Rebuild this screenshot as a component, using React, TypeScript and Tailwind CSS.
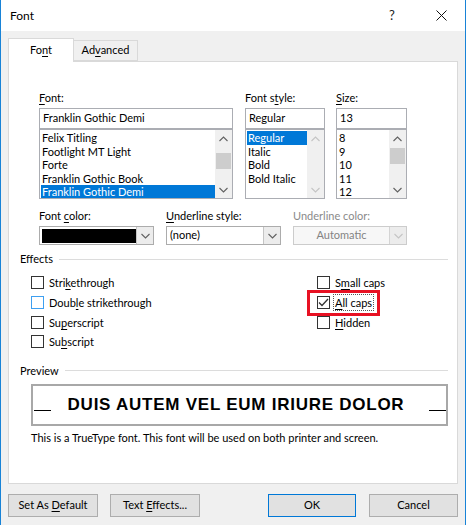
import React from 'react';

const FONT = { fontFamily: 'Lato, "Noto Sans", sans-serif' };

const Chevron: React.FC<{ up?: boolean; light?: boolean }> = ({ up, light }) => (
  <svg width="9" height="6" viewBox="0 0 9 6" className="block">
    <polyline
      points={up ? '0.5,5 4.5,1 8.5,5' : '0.5,1 4.5,5 8.5,1'}
      fill="none"
      stroke={light ? '#c4c4c4' : '#606060'}
      strokeWidth="1.1"
    />
  </svg>
);

// text with one underlined access-key letter
const Key: React.FC<{ text: string; at: number }> = ({ text, at }) => (
  <>
    {text.slice(0, at)}
    <span className="underline underline-offset-2">{text[at]}</span>
    {text.slice(at + 1)}
  </>
);

const ListBox: React.FC<{
  items: string[];
  selected: number;
  width: string;
  thumb?: string;
  disabled?: boolean;
}> = ({ items, selected, width, thumb, disabled }) => (
  <div className={`flex h-[70px] border border-[#abadb3] bg-white ${width}`}>
    <div className="flex-1 overflow-hidden pl-px pt-px">
      {items.map((it, i) => (
        <div
          key={it}
          className={`h-[13.6px] leading-[13.6px] pl-[1px] whitespace-nowrap ${
            i === selected ? 'bg-[#0078d7] text-white' : 'text-black'
          }`}
        >
          {it}
        </div>
      ))}
    </div>
    <div className="w-[17px] bg-[#f0f0f0] flex flex-col items-center">
      <div className="h-[17px] flex items-center justify-center">
        <Chevron up light={disabled} />
      </div>
      <div className="flex-1 w-full">
        {thumb && <div className={`mx-px bg-[#cdcdcd] h-[16px] ${thumb}`} />}
      </div>
      <div className="h-[17px] flex items-center justify-center">
        <Chevron light={disabled} />
      </div>
    </div>
  </div>
);

const Dropdown: React.FC<{ children?: React.ReactNode; disabled?: boolean }> = ({ children, disabled }) => (
  <div
    className={`flex h-[19px] w-full border ${
      disabled ? 'border-[#cccccc] bg-[#f7f7f7]' : 'border-[#acacac] bg-white'
    }`}
  >
    <div className="flex-1 flex items-center overflow-hidden">{children}</div>
    <div
      className={`w-[17px] border-l flex items-center justify-center bg-[#ececec] ${
        disabled ? 'border-[#d4d4d4]' : 'border-[#c4c4c4]'
      }`}
    >
      <Chevron light={disabled} />
    </div>
  </div>
);

const Check: React.FC<{ label: React.ReactNode; checked?: boolean; focus?: boolean; blue?: boolean }> = ({
  label,
  checked,
  focus,
  blue,
}) => (
  <div className="h-[19.7px] flex items-center">
    <div
      className={`w-[13px] h-[13px] border bg-white flex items-center justify-center ${
        blue ? 'border-[#3e9ff0]' : 'border-[#333333]'
      }`}
    >
      {checked && (
        <svg width="11" height="9" viewBox="0 0 11 9">
          <polyline points="1,4.5 4,7.5 10,1" fill="none" stroke="#333" strokeWidth="1.3" />
        </svg>
      )}
    </div>
    <span
      className={`ml-[3px] px-px leading-[15px] border ${
        focus ? 'border-dotted border-[#555]' : 'border-transparent'
      }`}
    >
      {label}
    </span>
  </div>
);

const Button: React.FC<{ children: React.ReactNode; primary?: boolean; w: string }> = ({ children, primary, w }) => (
  <div
    className={`h-[23px] ${w} flex items-center justify-center bg-[#e1e1e1] border ${
      primary ? 'border-[#0078d7]' : 'border-[#adadad]'
    }`}
  >
    <span>{children}</span>
  </div>
);

export default function App() {
  return (
    <div
      style={FONT}
      className="w-[466px] h-[525px] bg-[#f0f0f0] border-x border-[#1883d7] text-[11px] text-black flex flex-col overflow-hidden"
    >
      {/* title bar */}
      <div className="h-[31px] bg-white flex items-center shrink-0 text-[12px]">
        <span className="ml-[9px] flex-1">Font</span>
        <span className="w-[14px] mr-[33px] text-[13px] text-[#222]">?</span>
        <svg width="11" height="11" viewBox="0 0 11 11" className="mr-[18px]">
          <path d="M0.5 0.5 L10.5 10.5 M10.5 0.5 L0.5 10.5" stroke="#111" strokeWidth="1" />
        </svg>
      </div>

      {/* tabs */}
      <div className="flex items-end px-[7px] pt-[7px] h-[30px] relative z-10">
        <div className="w-[66px] h-[24px] bg-white border border-b-0 border-[#d9d9d9] flex items-center justify-center -mb-px">
          <span>
            <Key text="Font" at={2} />
          </span>
        </div>
        <div className="w-[64px] h-[21px] bg-[#f0f0f0] border border-l-0 border-[#d9d9d9] flex items-center justify-center">
          <span>
            <Key text="Advanced" at={2} />
          </span>
        </div>
      </div>

      {/* panel */}
      <div className="mx-[7px] h-[423px] bg-white border border-[#d9d9d9] flex flex-col shrink-0">
        {/* font / style / size */}
        <div className="flex ml-[30px] mt-[28px] gap-[12px]">
          <div className="w-[194px] flex flex-col">
            <div className="h-[16px] leading-[16px] mb-[2px]">
              <Key text="Font:" at={0} />
            </div>
            <div className="h-[21px] border border-[#abadb3] flex items-center pl-[3px]">Franklin Gothic Demi</div>
            <ListBox
              width="w-[194px]"
              items={['Felix Titling', 'Footlight MT Light', 'Forte', 'Franklin Gothic Book', 'Franklin Gothic Demi']}
              selected={4}
              thumb="mt-[6px]"
            />
          </div>
          <div className="w-[80px] flex flex-col">
            <div className="h-[16px] leading-[16px] mb-[2px]">
              <Key text="Font style:" at={6} />
            </div>
            <div className="h-[21px] border border-[#abadb3] flex items-center pl-[3px]">Regular</div>
            <div className="flex h-[70px] border border-[#abadb3] bg-white">
              <div className="flex-1 pt-px pl-px">
                {['Regular', 'Italic', 'Bold', 'Bold Italic'].map((s, i) => (
                  <div
                    key={s}
                    className={`h-[13.6px] leading-[13.6px] pl-px whitespace-nowrap ${
                      i === 0 ? 'bg-[#0078d7] text-white' : ''
                    }`}
                  >
                    {s}
                  </div>
                ))}
              </div>
              <div className="w-[17px] bg-[#f0f0f0] flex flex-col items-center justify-between">
                <div className="h-[17px] flex items-center">
                  <Chevron up light />
                </div>
                <div className="h-[17px] flex items-center">
                  <Chevron light />
                </div>
              </div>
            </div>
          </div>
          <div className="w-[71px] flex flex-col -ml-px">
            <div className="h-[16px] leading-[16px] mb-[2px]">
              <Key text="Size:" at={0} />
            </div>
            <div className="h-[21px] border border-[#abadb3] flex items-center pl-[3px]">13</div>
            <ListBox width="w-[71px]" items={['8', '9', '10', '11', '12']} selected={-1} thumb="mt-px" />
          </div>
        </div>

        {/* colour / underline */}
        <div className="flex ml-[30px] mt-[9px] gap-[12px]">
          <div className="w-[115px]">
            <div className="h-[16px] leading-[16px] mb-[2px]">
              Font <Key text="color:" at={0} />
            </div>
            <Dropdown>
              <div className="ml-[2px] h-[14px] w-[94px] bg-black" />
            </Dropdown>
          </div>
          <div className="w-[115px]">
            <div className="h-[16px] leading-[16px] mb-[2px]">
              <Key text="Underline style:" at={0} />
            </div>
            <Dropdown>
              <span className="pl-[3px]">(none)</span>
            </Dropdown>
          </div>
          <div className="w-[114px]">
            <div className="h-[16px] leading-[16px] mb-[2px] text-[#8a8a8a]">Underline color:</div>
            <Dropdown disabled>
              <span className="flex-1 text-center text-[#838383]">Automatic</span>
            </Dropdown>
          </div>
        </div>

        {/* effects */}
        <div className="flex items-center ml-[11px] mr-[9px] mt-[6px] h-[16px]">
          <span>Effects</span>
          <div className="flex-1 ml-[6px] h-px bg-[#dcdcdc]" />
        </div>
        <div className="flex ml-[22px] mt-[6px]">
          <div className="w-[286px] flex flex-col">
            <Check label={<Key text="Strikethrough" at={4} />} />
            <Check label={<Key text="Double strikethrough" at={4} />} blue />
            <Check label={<Key text="Superscript" at={2} />} />
            <Check label={<Key text="Subscript" at={2} />} />
          </div>
          <div className="flex flex-col">
            <Check label={<Key text="Small caps" at={1} />} />
            <div className="relative">
              <Check label={<Key text="All caps" at={0} />} checked focus />
              <div className="absolute left-[-10px] top-[-3px] w-[73px] h-[26px] border-[3px] border-[#e81123]" />
            </div>
            <Check label={<Key text="Hidden" at={0} />} />
          </div>
        </div>

        {/* preview */}
        <div className="flex items-center ml-[11px] mr-[9px] mt-[11px] h-[16px]">
          <span>Preview</span>
          <div className="flex-1 ml-[6px] h-px bg-[#dcdcdc]" />
        </div>
        <div className="ml-[22px] mr-[9px] mt-[5px] h-[42px] border-2 border-[#a8a8a8] flex items-center">
          <div className="w-[17px] h-px bg-black mt-[11px] ml-px" />
          <div
            className="flex-1 pr-[8px] text-center text-[17px] font-bold tracking-[0.75px]"
            style={{ fontFamily: '"Liberation Sans", Arial, sans-serif' }}
          >
            DUIS AUTEM VEL EUM IRIURE DOLOR
          </div>
          <div className="w-[17px] h-px bg-black mt-[11px]" />
        </div>
        <div className="ml-[22px] mt-[4px] h-[16px] leading-[16px]">
          This is a TrueType font. This font will be used on both printer and screen.
        </div>
      </div>

      {/* buttons */}
      <div className="flex mt-[10px] px-[7px]">
        <Button w="w-[90px]">
          Set As <Key text="Default" at={0} />
        </Button>
        <div className="ml-[12px]">
          <Button w="w-[90px]">
            Text <Key text="Effects..." at={0} />
          </Button>
        </div>
        <div className="ml-auto">
          <Button w="w-[88px]" primary>
            OK
          </Button>
        </div>
        <div className="ml-[13px]">
          <Button w="w-[89px]">Cancel</Button>
        </div>
      </div>
    </div>
  );
}
